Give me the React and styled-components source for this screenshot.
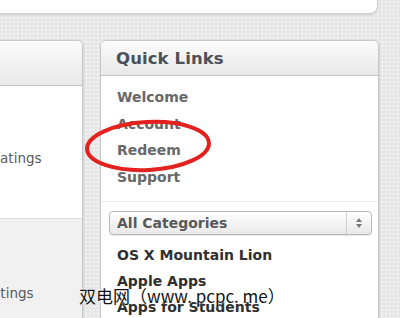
import React from "react";
import styled, { createGlobalStyle } from "styled-components";

const GlobalStyle = createGlobalStyle`
  html, body {
    margin: 0;
    padding: 0;
    overflow: hidden;
  }
  body {
    width: 400px;
    height: 318px;
    background-color: #e7e7e7;
    background-image:
      radial-gradient(rgba(255, 255, 255, 0.5) 1px, transparent 1px),
      radial-gradient(rgba(0, 0, 0, 0.03) 1px, transparent 1px);
    background-size: 4px 4px, 5px 5px;
    background-position: 0 0, 2px 2px;
    font-family: "DejaVu Sans", "Liberation Sans", sans-serif;
  }
`;

const Page = styled.div`
  position: relative;
  width: 400px;
  height: 318px;
  overflow: hidden;
`;

const TopCard = styled.div`
  margin-left: -20px;
  margin-top: -20px;
  width: 398px;
  height: 34px;
  background: #ffffff;
  border: 1px solid #cfcfcf;
  border-radius: 0 0 8px 8px;
  box-shadow: 0 1px 2px rgba(0, 0, 0, 0.12);
  box-sizing: border-box;
`;

const Columns = styled.div`
  display: flex;
  align-items: flex-start;
  gap: 17px;
  margin-top: 26px;
  margin-left: -60px;
`;

const Panel = styled.section`
  position: relative;
  width: ${(p) => p.$width}px;
  flex: none;
  background: #ffffff;
  border: 1px solid #c8c8c8;
  border-radius: 6px 6px 0 0;
  box-shadow: 1px 0 2px rgba(0, 0, 0, 0.08);
  box-sizing: border-box;
`;

const PanelHeader = styled.header`
  height: ${(p) => p.$height}px;
  box-sizing: border-box;
  padding-left: 15px;
  display: flex;
  align-items: center;
  border-radius: 5px 5px 0 0;
  background: linear-gradient(#fbfbfb, #e8e8e8);
  border-bottom: 1px solid #c4c4c4;
`;

const PanelTitle = styled.h2`
  margin: 0;
  font-size: 16.5px;
  font-weight: bold;
  color: #4b5057;
  letter-spacing: 0.1px;
`;

const LeftBody = styled.div`
  height: 133px;
  padding: ${(p) => p.$top}px 0 0 ${(p) => p.$indent}px;
  box-sizing: border-box;
  background: ${(p) => (p.$muted ? "#f1f1f1" : "#ffffff")};
  border-bottom: ${(p) => (p.$muted ? "none" : "1px solid #dcdcdc")};
`;

const Rating = styled.span`
  font-size: 13.5px;
  color: #5a5a5a;
`;

const LinkList = styled.ul`
  list-style: none;
  margin: 0;
  padding: 8px 0 10px 16px;
  border-bottom: 1px solid #ececec;
  position: relative;
`;

const QuickLink = styled.li`
  line-height: 26.7px;
  font-size: 14px;
  font-weight: bold;
  color: #686868;
`;

const Ring = styled.svg`
  position: absolute;
  left: -17px;
  top: 42px;
  overflow: visible;
`;

const SelectBox = styled.div`
  margin: 9px 6px 0 8px;
  height: 24px;
  display: flex;
  align-items: center;
  border: 1px solid #b9b9b9;
  border-radius: 4px;
  background: linear-gradient(#ffffff, #e9e9e9);
  box-shadow: 0 1px 1px rgba(0, 0, 0, 0.1);
  box-sizing: border-box;
`;

const SelectLabel = styled.span`
  flex: 1;
  padding-left: 7px;
  font-size: 14px;
  font-weight: bold;
  color: #595959;
`;

const Stepper = styled.span`
  width: 24px;
  height: 100%;
  border-left: 1px solid #d2d2d2;
  display: flex;
  align-items: center;
  justify-content: center;
`;

const CategoryList = styled.ul`
  list-style: none;
  margin: 7px 0 0;
  padding: 0 0 0 16px;
`;

const Category = styled.li`
  line-height: 26px;
  font-size: 14px;
  font-weight: bold;
  color: #2f2f2f;
`;

const Watermark = styled.div`
  position: absolute;
  left: 79px;
  top: 285px;
  font-family: "Noto Sans CJK SC", sans-serif;
  font-size: 17px;
  line-height: 22px;
  color: #111;
  white-space: nowrap;
  text-shadow: 0 0 2px #fff, 0 0 2px #fff;
`;

const links = ["Welcome", "Account", "Redeem", "Support"];
const categories = ["OS X Mountain Lion", "Apple Apps", "Apps for Students"];

export default function App() {
  return (
    <Page>
      <GlobalStyle />
      <TopCard />
      <Columns>
        <Panel $width={143}>
          <PanelHeader $height={45} />
          <LeftBody $indent={50} $top={62}>
            <Rating>Ratings</Rating>
          </LeftBody>
          <LeftBody $indent={42} $top={64} $muted>
            <Rating>Ratings</Rating>
          </LeftBody>
        </Panel>
        <Panel $width={279}>
          <PanelHeader $height={35}>
            <PanelTitle>Quick Links</PanelTitle>
          </PanelHeader>
          <LinkList>
            {links.map((l) => (
              <QuickLink key={l}>{l}</QuickLink>
            ))}
            <Ring width="130" height="56">
              <ellipse
                cx="64"
                cy="28"
                rx="61"
                ry="24"
                fill="none"
                stroke="#e3211f"
                strokeWidth="4"
                transform="rotate(-3 64 28)"
              />
            </Ring>
          </LinkList>
          <SelectBox>
            <SelectLabel>All Categories</SelectLabel>
            <Stepper>
              <svg width="8" height="12" viewBox="0 0 8 12">
                <path d="M4 1 L7 5 H1 Z" fill="#777" />
                <path d="M4 11 L7 7 H1 Z" fill="#777" />
              </svg>
            </Stepper>
          </SelectBox>
          <CategoryList>
            {categories.map((c) => (
              <Category key={c}>{c}</Category>
            ))}
          </CategoryList>
        </Panel>
      </Columns>
      <Watermark>双电网（www. pcpc. me）</Watermark>
    </Page>
  );
}
